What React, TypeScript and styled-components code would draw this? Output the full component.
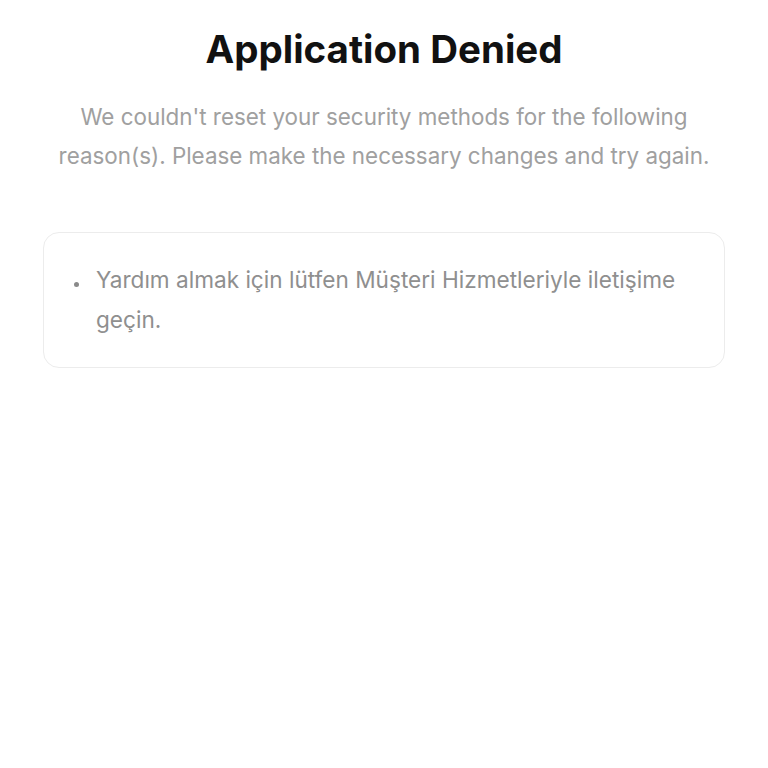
import React from 'react';
import styled, { createGlobalStyle } from 'styled-components';

const GlobalStyle = createGlobalStyle`
  html, body {
    margin: 0;
    padding: 0;
    background: #fff;
  }
  body {
    font-family: Inter, 'Open Sans', Arial, sans-serif;
    -webkit-font-smoothing: antialiased;
  }
`;

export default function App() {
  return (
    <>
      <GlobalStyle />
      <Page>
        <Title>Application Denied</Title>
        <Subtitle>
          We couldn't reset your security methods for the following reason(s). Please make the
          necessary changes and try again.
        </Subtitle>
        <ReasonCard>
          <ReasonList>
            <ReasonItem>Yardım almak için lütfen Müşteri Hizmetleriyle iletişime geçin.</ReasonItem>
          </ReasonList>
        </ReasonCard>
      </Page>
    </>
  );
}

const Page = styled.div`
  display: flex;
  flex-direction: column;
  align-items: center;
  padding: 24px 43px 0;
  min-height: 768px;
  box-sizing: border-box;
`;

const Title = styled.h1`
  margin: 0;
  font-family: Inter, Arial, sans-serif;
  font-weight: 700;
  font-size: 38.5px;
  line-height: 50px;
  color: #111;
`;

const Subtitle = styled.p`
  margin: 23px 0 0;
  max-width: 680px;
  text-align: center;
  font-size: 22.4px;
  line-height: 39px;
  color: #a0a0a0;
`;

const ReasonCard = styled.div`
  align-self: stretch;
  margin-top: 57px;
  padding: 27px 40px 27px 30px;
  border: 1.5px solid #ececec;
  border-radius: 16px;
`;

const ReasonList = styled.ul`
  margin: 0;
  padding: 0;
  list-style: none;
  font-size: 22.6px;
  line-height: 40px;
  color: #8f8f8f;
`;

const ReasonItem = styled.li`
  display: flex;
  align-items: flex-start;
  gap: 17px;
  &::before {
    content: '';
    flex: none;
    width: 5px;
    height: 5px;
    margin-top: 22px;
    border-radius: 50%;
    background: #8a8a8a;
  }
`;
